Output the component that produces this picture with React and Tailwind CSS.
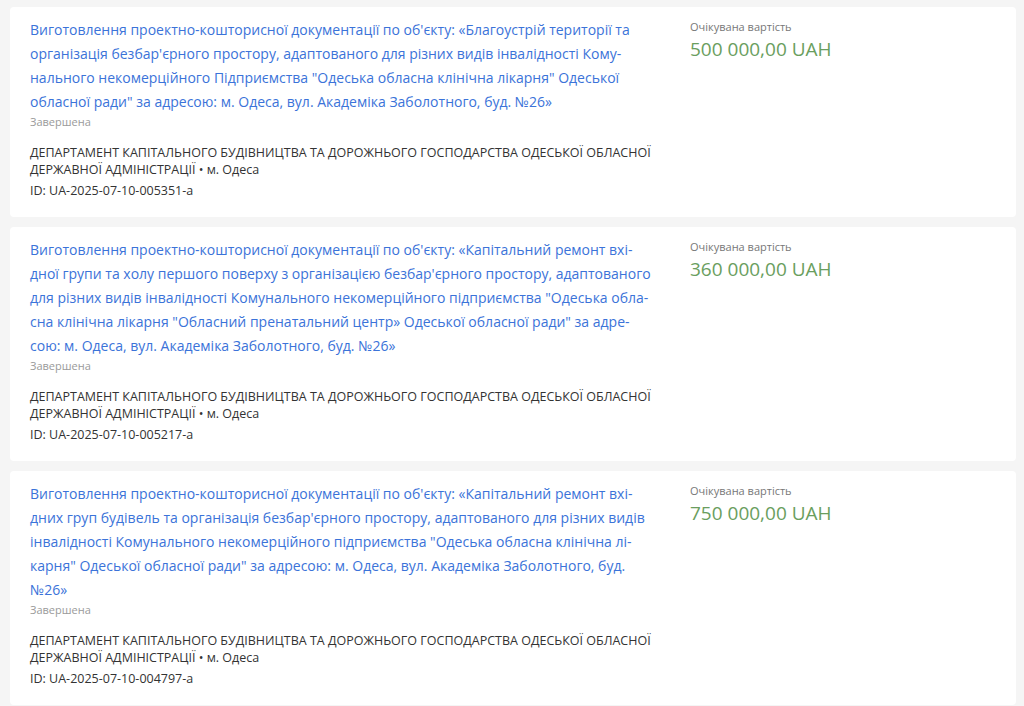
import React from "react";

const items = [
  {
    title:
      "Виготовлення проектно-кошторисної документації по об'єкту: «Благоустрій території та організація безбар'єрного простору, адаптованого для різних видів інвалідності Кому\u00ADнального некомерційного Підприємства \"Одеська обласна клінічна лікарня\" Одеської обласної ради\" за адресою: м. Одеса, вул. Академіка Заболотного, буд. №26»",
    id: "UA-2025-07-10-005351-a",
    price: "500 000,00 UAH",
  },
  {
    title:
      "Виготовлення проектно-кошторисної документації по об'єкту: «Капітальний ремонт вхі\u00ADдної групи та холу першого поверху з організацією безбар'єрного простору, адаптованого для різних видів інвалідності Комунального некомерційного підприємства \"Одеська обла\u00ADсна клінічна лікарня \"Обласний пренатальний центр» Одеської обласної ради\" за адре\u00ADсою: м. Одеса, вул. Академіка Заболотного, буд. №26»",
    id: "UA-2025-07-10-005217-a",
    price: "360 000,00 UAH",
  },
  {
    title:
      "Виготовлення проектно-кошторисної документації по об'єкту: «Капітальний ремонт вхі\u00ADдних груп будівель та організація безбар'єрного простору, адаптованого для різних видів інвалідності Комунального некомерційного підприємства \"Одеська обласна клінічна лі\u00ADкарня\" Одеської обласної ради\" за адресою: м. Одеса, вул. Академіка Заболотного, буд. №26»",
    id: "UA-2025-07-10-004797-a",
    price: "750 000,00 UAH",
  },
];

function Card({ item }) {
  return (
    <div className="bg-white rounded-[4px] flex px-5 pt-[11px] pb-[17px]">
      <div className="w-[624px] shrink-0">
        <a className="block text-[14px] leading-[24px] text-[#3b73d9]">{item.title}</a>
        <div className="text-[11px] leading-[16px] text-[#9a9a9a]">Завершена</div>
        <div className="mt-[14px] text-[12.5px] leading-[17px] text-[#333]">
          ДЕПАРТАМЕНТ КАПІТАЛЬНОГО БУДІВНИЦТВА ТА ДОРОЖНЬОГО ГОСПОДАРСТВА ОДЕСЬКОЇ ОБЛАСНОЇ ДЕРЖАВНОЇ АДМІНІСТРАЦІЇ • м. Одеса
        </div>
        <div className="mt-[4px] text-[12.5px] leading-[18px] text-[#333]">ID: {item.id}</div>
      </div>
      <div className="ml-[36px]">
        <div className="text-[11px] leading-[18px] text-[#777]">Очікувана вартість</div>
        <div className="text-[19px] leading-[26px] text-[#6a9e5e]">{item.price}</div>
      </div>
    </div>
  );
}

export default function App() {
  return (
    <div
      className="min-h-[706px] bg-[#f5f5f5] pt-[7px] pl-[10px] pr-[8px] flex flex-col gap-[10px]"
      style={{ fontFamily: '"Open Sans", sans-serif' }}
    >
      {items.map((it) => (
        <Card key={it.id} item={it} />
      ))}
    </div>
  );
}
